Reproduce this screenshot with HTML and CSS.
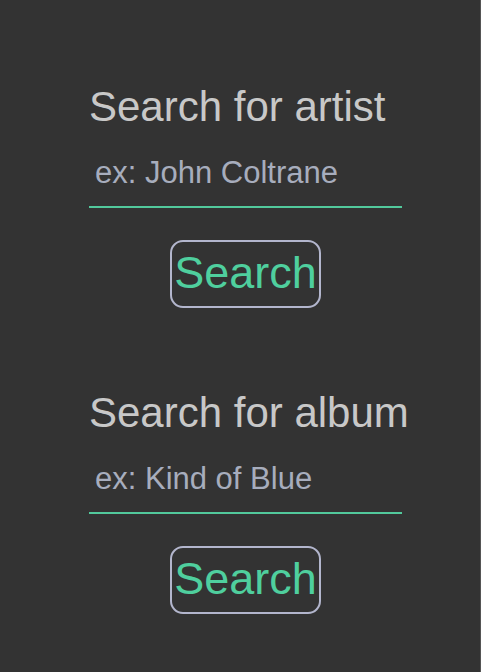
FILE: index.html
```html
<!DOCTYPE html>
<html lang="en">
<head>
<meta charset="utf-8">
<title>Search</title>
<link rel="stylesheet" href="styles.css">
</head>
<body>
<main class="page">
  <form class="search-form">
    <h2 class="search-title">Search for artist</h2>
    <input class="search-input" type="text" placeholder="ex: John Coltrane">
    <button class="search-btn" type="button">Search</button>
  </form>
  <form class="search-form">
    <h2 class="search-title">Search for album</h2>
    <input class="search-input" type="text" placeholder="ex: Kind of Blue">
    <button class="search-btn" type="button">Search</button>
  </form>
</main>
</body>
</html>
```

FILE: styles.css
```css
html, body {
  margin: 0;
  padding: 0;
  background: #333333;
}
.page {
  box-sizing: border-box;
  min-height: 672px;
  padding: 83px 0 0 89px;
  border-right: 1px solid #555555;
  display: flex;
  flex-direction: column;
  gap: 81px;
  font-family: "Liberation Sans", Arial, sans-serif;
}
.search-form {
  width: 313px;
  display: flex;
  flex-direction: column;
  align-items: center;
  margin: 0;
}
.search-title {
  align-self: stretch;
  margin: 0;
  font-size: 42px;
  font-weight: 400;
  line-height: normal;
  color: #c8c8c8;
  white-space: nowrap;
}
.search-input {
  box-sizing: border-box;
  align-self: stretch;
  margin: 14px 0 0;
  padding: 10px 6px 15px;
  font-family: inherit;
  font-size: 31px;
  line-height: normal;
  color: #cccccc;
  background: transparent;
  border: none;
  border-bottom: 2px solid #52c99c;
  outline: none;
}
.search-input::placeholder {
  color: #a7adbd;
  opacity: 1;
}
.search-btn {
  margin-top: 32px;
  padding: 5px 2px 7px;
  font-family: inherit;
  font-size: 45px;
  line-height: normal;
  color: #4fcf9e;
  background: transparent;
  border: 2px solid #b3b6cd;
  border-radius: 13px;
  cursor: pointer;
}
```
